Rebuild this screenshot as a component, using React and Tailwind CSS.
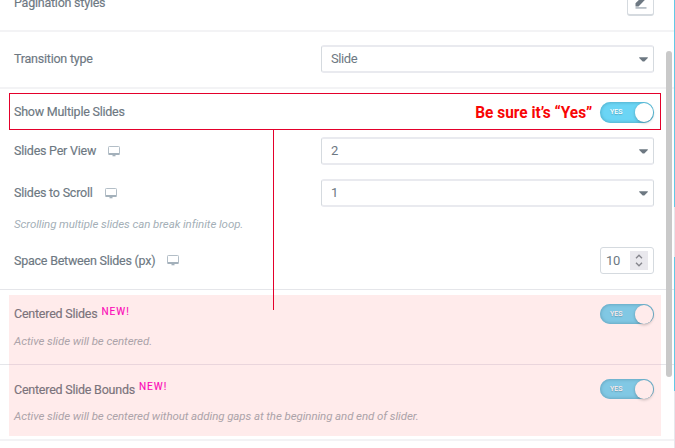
import React from "react";

function Toggle({ muted }) {
  return (
    <div
      className={`relative flex w-[54px] shrink-0 items-center rounded-full pl-[10px] ${
        muted
          ? "h-[20px] bg-[#81c8e4] shadow-[inset_0_0_3px_1px_#6aaac4]"
          : "h-[21px] bg-[#6bd5f5] shadow-[inset_0_0_3px_1px_#55b4d0]"
      }`}
    >
      <span
        className={`text-[7px] font-medium leading-none [text-shadow:0_1px_1px_rgba(0,0,0,0.2)] ${
          muted ? "text-[#ffebeb]" : "text-white"
        }`}
      >
        YES
      </span>
      <span
        className={`absolute right-[1px] top-[1px] h-[18.5px] w-[18.5px] rounded-full shadow-[0_1px_3px_rgba(0,0,0,0.25)] ${
          muted ? "bg-[#ffebeb]" : "bg-white"
        }`}
      />
    </div>
  );
}

function Select({ value }) {
  return (
    <div className="flex h-[28px] w-[333px] shrink-0 items-center justify-between rounded-[3px] border border-y-2 border-x-[#d5dadf] border-y-[#e9eaef] pl-[9px] pr-[5px] text-[13px] tracking-[-0.4px] text-[#6d7882]">
      <span>{value}</span>
      <svg width="9" height="5" viewBox="0 0 9 5">
        <path d="M0.2 0.2h8.6v0.7L5.3 4.6H3.7L0.2 0.9z" fill="#6d7882" />
      </svg>
    </div>
  );
}

function Monitor() {
  return (
    <svg width="12" height="11" viewBox="0 0 12 11" className="ml-[12px] shrink-0">
      <rect x="0.5" y="0.5" width="11" height="8" rx="0.8" fill="none" stroke="#b3bec7" />
      <path d="M0.6 7h10.8v2H0.6z" fill="#a4b1bb" />
      <path d="M4.5 9h3v1.3h-3z" fill="#a4b1bb" />
    </svg>
  );
}

function Label({ children, className = "" }) {
  return (
    <span className={`whitespace-nowrap text-[12.5px] leading-[16px] tracking-[-0.23px] [-webkit-text-stroke:0.15px_currentColor] ${className}`}>
      {children}
    </span>
  );
}

function NewTag({ children }) {
  return (
    <span className="ml-[4px] text-[10px] leading-[12px] tracking-[1px] text-[#fb0cb8] [-webkit-text-stroke:0.15px_currentColor]">
      {children}
    </span>
  );
}

export default function App() {
  return (
    <div className="relative h-[448px] w-[675px] overflow-hidden bg-white font-['Roboto','Liberation_Sans',sans-serif] text-[#6d7882]">
      <div className="flex h-full">
        <main className="flex w-[674px] flex-col">
          <section className="flex h-[32px] shrink-0 justify-between border-b-2 border-[#f3f3f5] pl-[14px] pr-[20px]">
            <Label className="-mt-[5px]">Pagination styles</Label>
            <div className="-mt-[12px] flex h-[28px] w-[27px] items-end justify-center rounded-[3px] border border-b-2 border-[#d5dadf] pb-[5px]">
              <svg width="12" height="13" viewBox="0 0 12 13">
                <path d="M0.5 10.4V7.3L7.8 0l3 3L3.5 10.4z" fill="#6d7882" />
                <path d="M0.5 11h11v1.8h-11z" fill="#b7bfc6" />
              </svg>
            </div>
          </section>

          <section className="flex h-[57px] shrink-0 items-center justify-between border-b-2 border-[#f3f3f5] pb-px pl-[14px] pr-[20px]">
            <Label>Transition type</Label>
            <Select value="Slide" />
          </section>

          <section className="flex h-[201px] shrink-0 flex-col border-b border-[#e5e6ea]">
            <div className="ml-[9px] mt-[4px] flex h-[37px] w-[652px] shrink-0 items-center border border-[#e4002b] pl-[4px] pr-[6px] pt-[2px]">
              <Label className="mb-[2px] grow">Show Multiple Slides</Label>
              <span className="mb-[2px] mr-[8px] origin-right scale-x-[0.905] whitespace-nowrap text-[17px] font-bold leading-[20px] text-[#f80505]">
                Be sure it’s “Yes”
              </span>
              <Toggle />
            </div>
            <div className="mt-[7px] flex h-[28px] shrink-0 items-center pl-[14px] pr-[20px]">
              <Label>Slides Per View</Label>
              <Monitor />
              <span className="grow" />
              <Select value="2" />
            </div>
            <div className="mt-[14px] flex h-[28px] shrink-0 items-center pl-[14px] pr-[20px]">
              <Label>Slides to Scroll</Label>
              <Monitor />
              <span className="grow" />
              <Select value="1" />
            </div>
            <p className="mt-[9px] h-[16px] pl-[14px] text-[11.5px] italic leading-[16px] tracking-[-0.08px] text-[#a4afb7]">
              Scrolling multiple slides can break infinite loop.
            </p>
            <div className="mt-[15px] flex h-[27px] shrink-0 items-center pl-[14px] pr-[20px]">
              <Label>Space Between Slides (px)</Label>
              <Monitor />
              <span className="grow" />
              <div className="flex h-[27px] w-[54px] items-center justify-between rounded-[3px] border border-[#d5dadf] pl-[5px] pr-[5px] text-[13px] tracking-[-0.4px]">
                <span>10</span>
                <span className="flex h-[19px] w-[18px] items-center justify-center bg-[#e9e8ed]">
                  <svg width="8" height="13" viewBox="0 0 8 13" fill="none" stroke="#85858c" strokeWidth="1.3">
                    <path d="M1 4.3L4 1.2l3 3.1M1 8.7l3 3.1 3-3.1" />
                  </svg>
                </span>
              </div>
            </div>
          </section>

          <section className="flex h-[75px] shrink-0 flex-col border-b border-[#e5e6ea]">
            <div className="ml-[9px] mt-[5px] h-[70px] w-[652px] shrink-0 border-b border-[#ead5dc] bg-[#ffebeb] pl-[5px] pr-[7px] pt-[9px] text-[#7b737b]">
              <div className="flex h-[20px] items-center justify-between">
                <div className="flex items-start">
                  <Label>Centered Slides</Label>
                  <NewTag>NEW!</NewTag>
                </div>
                <Toggle muted />
              </div>
              <p className="mt-[9px] text-[11.5px] italic leading-[16px] tracking-[-0.08px] text-[#aca3a9]">Active slide will be centered.</p>
            </div>
          </section>

          <section className="flex h-[76px] shrink-0 flex-col border-b-2 border-[#f3f3f5]">
            <div className="ml-[9px] h-[71px] w-[652px] shrink-0 bg-[#ffebeb] pl-[5px] pr-[7px] pt-[14px] text-[#7b737b]">
              <div className="flex h-[20px] items-center justify-between">
                <div className="flex items-start">
                  <Label className="pt-px">Centered Slide Bounds</Label>
                  <NewTag>NEW!</NewTag>
                </div>
                <Toggle muted />
              </div>
              <p className="mt-[9px] text-[11.5px] italic leading-[16px] tracking-[-0.08px] text-[#aca3a9]">
                Active slide will be centered without adding gaps at the beginning and end of slider.
              </p>
            </div>
          </section>
        </main>

        <aside className="flex w-px flex-col bg-[#e6e7ec]">
          <div className="h-[207px] bg-[#62c9e6]" />
          <div className="mt-[50px] h-[134px] bg-[#62c9e6]" />
        </aside>
      </div>

      <div className="absolute left-[273px] top-[130px] h-[180px] w-px bg-[#e4002b]" />
      <div className="absolute left-[666px] top-[51px] h-[326px] w-[6px] rounded-full bg-[#c6c6c6]/95" />
    </div>
  );
}
